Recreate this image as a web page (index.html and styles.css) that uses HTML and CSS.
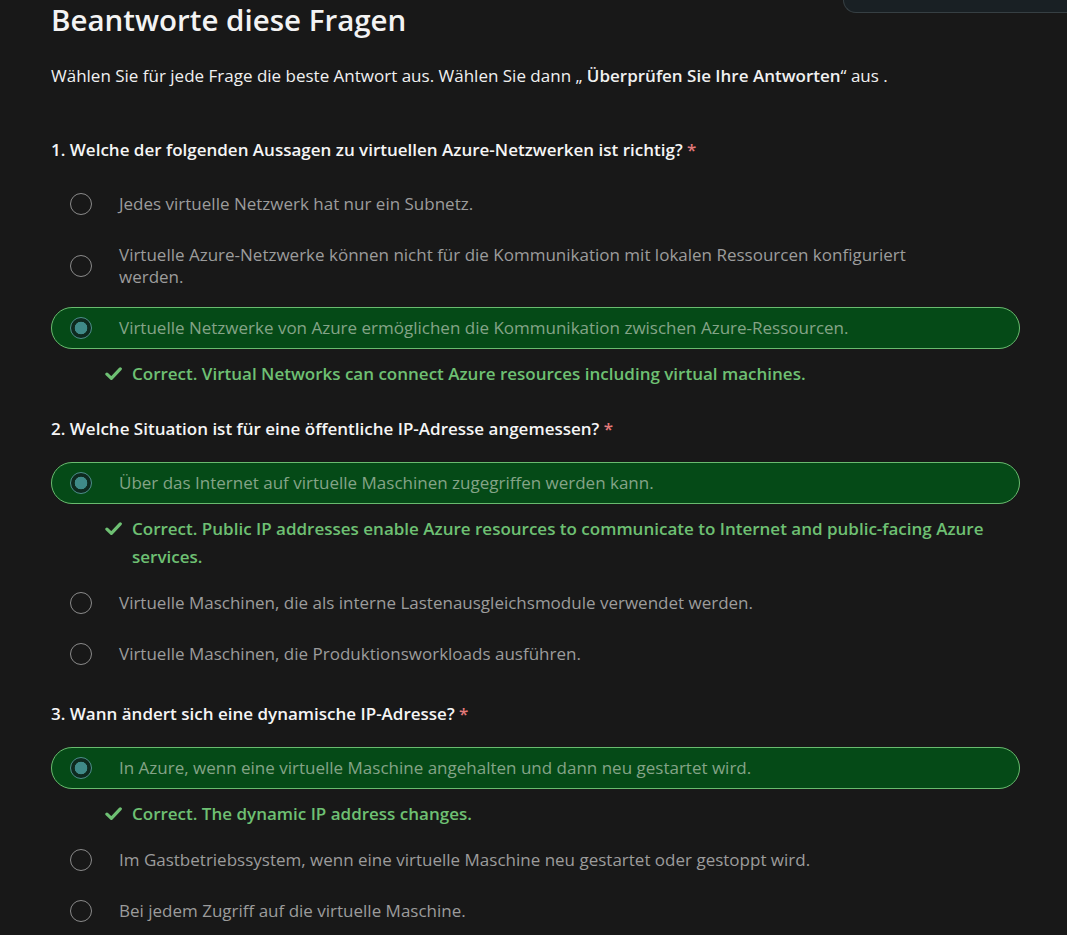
FILE: index.html
```html
<!DOCTYPE html>
<html lang="de">
<head>
<meta charset="utf-8">
<title>Beantworte diese Fragen</title>
<link rel="stylesheet" href="styles.css">
</head>
<body>
<div class="topcard"></div>
<main class="page">
  <h1 class="title">Beantworte diese Fragen</h1>
  <p class="intro">Wählen Sie für jede Frage die beste Antwort aus. Wählen Sie dann „ <strong>Überprüfen Sie Ihre Antworten</strong>“ aus .</p>

  <section class="question">
    <h2 class="q-title">1. Welche der folgenden Aussagen zu virtuellen Azure-Netzwerken ist richtig? <span class="req">*</span></h2>
    <div class="options">
      <div class="option"><span class="radio"></span><span class="label">Jedes virtuelle Netzwerk hat nur ein Subnetz.</span></div>
      <div class="option"><span class="radio"></span><span class="label">Virtuelle Azure-Netzwerke können nicht für die Kommunikation mit lokalen Ressourcen konfiguriert werden.</span></div>
      <div class="option selected"><span class="radio"></span><span class="label">Virtuelle Netzwerke von Azure ermöglichen die Kommunikation zwischen Azure-Ressourcen.</span></div>
      <div class="feedback"><svg class="check" viewBox="0 0 16 16" width="17" height="17"><path d="M1.8 8.6 L6 12.6 L14.4 3.6" fill="none" stroke="currentColor" stroke-width="3" stroke-linecap="round" stroke-linejoin="round"/></svg><span>Correct. Virtual Networks can connect Azure resources including virtual machines.</span></div>
    </div>
  </section>

  <section class="question">
    <h2 class="q-title">2. Welche Situation ist für eine öffentliche IP-Adresse angemessen? <span class="req">*</span></h2>
    <div class="options">
      <div class="option selected"><span class="radio"></span><span class="label">Über das Internet auf virtuelle Maschinen zugegriffen werden kann.</span></div>
      <div class="feedback"><svg class="check" viewBox="0 0 16 16" width="17" height="17"><path d="M1.8 8.6 L6 12.6 L14.4 3.6" fill="none" stroke="currentColor" stroke-width="3" stroke-linecap="round" stroke-linejoin="round"/></svg><span>Correct. Public IP addresses enable Azure resources to communicate to Internet and public-facing Azure services.</span></div>
      <div class="option"><span class="radio"></span><span class="label">Virtuelle Maschinen, die als interne Lastenausgleichsmodule verwendet werden.</span></div>
      <div class="option"><span class="radio"></span><span class="label">Virtuelle Maschinen, die Produktionsworkloads ausführen.</span></div>
    </div>
  </section>

  <section class="question">
    <h2 class="q-title">3. Wann ändert sich eine dynamische IP-Adresse? <span class="req">*</span></h2>
    <div class="options">
      <div class="option selected"><span class="radio"></span><span class="label">In Azure, wenn eine virtuelle Maschine angehalten und dann neu gestartet wird.</span></div>
      <div class="feedback"><svg class="check" viewBox="0 0 16 16" width="17" height="17"><path d="M1.8 8.6 L6 12.6 L14.4 3.6" fill="none" stroke="currentColor" stroke-width="3" stroke-linecap="round" stroke-linejoin="round"/></svg><span>Correct. The dynamic IP address changes.</span></div>
      <div class="option"><span class="radio"></span><span class="label">Im Gastbetriebssystem, wenn eine virtuelle Maschine neu gestartet oder gestoppt wird.</span></div>
      <div class="option"><span class="radio"></span><span class="label">Bei jedem Zugriff auf die virtuelle Maschine.</span></div>
    </div>
  </section>
</main>
</body>
</html>
```
FILE: styles.css
```css
html, body {
  margin: 0;
  padding: 0;
  background: #181818;
  height: 100%;
  overflow: hidden;
}
body {
  font-family: "Open Sans", "Noto Sans", sans-serif;
  font-size: 17px;
  color: #f0f0f0;
  position: relative;
}
.topcard {
  position: absolute;
  top: 0;
  left: 843px;
  right: 0;
  height: 12px;
  background: #192024;
  border-left: 1px solid #363f43;
  border-bottom: 1px solid #363f43;
  border-bottom-left-radius: 16px;
}
.page {
  width: 969px;
  padding-left: 51px;
}
.title {
  margin: 0;
  font-size: 29.5px;
  line-height: 40px;
  font-weight: 600;
  color: #f3f3f3;
}
.intro {
  margin: 24px 0 0;
  line-height: 24px;
}
.intro strong {
  font-weight: 600;
}
.question {
  margin-top: 50px;
}
.question + .question {
  margin-top: 27px;
}
.q-title {
  margin: 0;
  font-size: 17px;
  line-height: 24px;
  font-weight: 600;
  color: #f5f5f5;
}
.req {
  color: #e27a7a;
}
.options {
  margin-top: 21px;
  display: flex;
  flex-direction: column;
  gap: 9px;
}
.option {
  display: flex;
  align-items: center;
  gap: 27px;
  padding: 9px 66px 9px 18px;
  border: 1px solid transparent;
  border-radius: 21px;
  line-height: 22px;
  color: #9c9c9c;
}
.radio {
  flex: none;
  width: 20px;
  height: 20px;
  border: 1px solid #8a8a8a;
  border-radius: 50%;
  box-sizing: content-box;
}
.option.selected {
  background: #054a17;
  border-color: #69bb6f;
  color: #84a487;
}
.option.selected .radio {
  border-color: #4d8d8a;
  background: radial-gradient(circle, #3f8a88 0 6px, #0e2a1f 6.6px);
}
.feedback {
  display: flex;
  align-items: flex-start;
  gap: 10px;
  margin: 2px 0;
  padding-left: 54px;
  line-height: 28px;
  font-weight: 600;
  color: #6ec073;
}
.check {
  flex: none;
  margin-top: 5px;
  color: #6ec073;
}
```
